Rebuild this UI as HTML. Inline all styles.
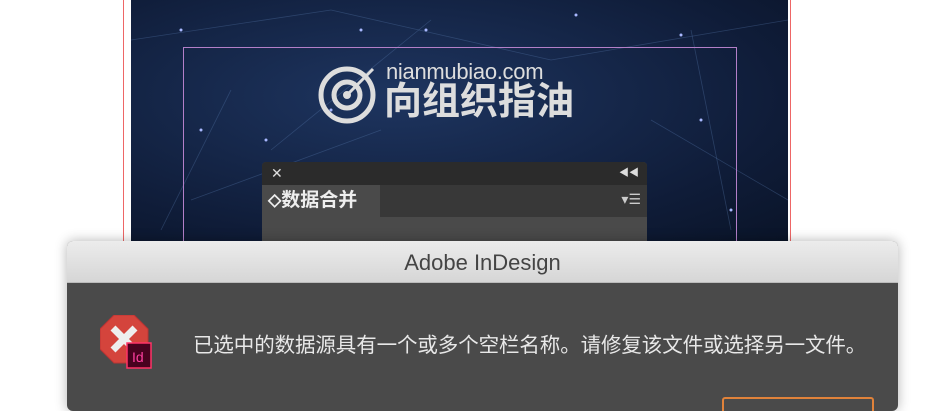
<!DOCTYPE html>
<html><head><meta charset="utf-8"><style>
body{margin:0;width:952px;height:400px;background:#fff;position:relative;overflow:hidden;font-family:"Liberation Sans","Noto Sans CJK SC",sans-serif}
.a{position:absolute}
</style></head><body>
<div class="a" style="left:123px;top:0;width:1px;height:241px;background:#e66"></div>
<div class="a" style="left:790px;top:0;width:1px;height:241px;background:#e66"></div>
<div class="a" style="left:131px;top:0;width:657px;height:241px;background:radial-gradient(ellipse at 40% 40%,#1e3560,#0f1c38 70%,#0a1428)"></div>
<svg class="a" style="left:131px;top:0" width="657" height="241">
<g stroke="#5a7ab0" stroke-opacity=".35" stroke-width=".8">
<line x1="0" y1="40" x2="200" y2="10"/><line x1="200" y1="10" x2="420" y2="60"/><line x1="420" y1="60" x2="657" y2="20"/><line x1="60" y1="200" x2="250" y2="130"/><line x1="520" y1="120" x2="657" y2="200"/><line x1="100" y1="90" x2="30" y2="230"/><line x1="560" y1="30" x2="600" y2="230"/><line x1="300" y1="20" x2="140" y2="150"/></g>
<g fill="#a9b8ff"><circle cx="50" cy="30" r="1.5"/><circle cx="230" cy="30" r="1.5"/><circle cx="445" cy="15" r="1.5"/><circle cx="295" cy="30" r="1.5"/><circle cx="550" cy="35" r="1.5"/><circle cx="70" cy="130" r="1.5"/><circle cx="570" cy="120" r="1.5"/><circle cx="135" cy="140" r="1.5"/><circle cx="600" cy="210" r="1.5"/><circle cx="200" cy="110" r="1.5"/></g>
<rect x="52.5" y="47.5" width="553" height="200" fill="none" stroke="#b37fc8" stroke-width="1"/>
<g fill="none" stroke="#ddd" stroke-width="5"><circle cx="216" cy="95" r="26"/><circle cx="216" cy="95" r="13"/></g>
<circle cx="216" cy="95" r="4" fill="#ddd"/><line x1="216" y1="95" x2="242" y2="69" stroke="#ddd" stroke-width="3"/>
</svg>
<div class="a" style="left:386px;top:59px;color:#ddd;font-size:22px;letter-spacing:-.3px">nianmubiao.com</div>
<div class="a" style="left:384px;top:80px;color:#ddd;font-size:38px;font-weight:bold;line-height:44px">向组织指油</div>
<div class="a" style="left:262px;top:162px;width:385px;height:80px;background:#4a4a4a;border-radius:4px 4px 0 0;overflow:hidden">
<div style="height:23px;background:#2b2b2b;color:#ddd;font-size:14px;line-height:23px;padding-left:9px">✕<span style="float:right;padding-right:8px;font-size:10px">◀◀</span></div>
<div style="height:32px;background:#383838;position:relative"><div style="position:absolute;left:0;top:0;width:118px;height:32px;background:#4a4a4a;color:#eee;font-size:19px;font-weight:bold;line-height:32px;padding-left:6px;box-sizing:border-box">⬦数据合并</div><div style="position:absolute;right:6px;top:6px;color:#ccc;font-size:14px">▾☰</div></div>
</div>
<div class="a" style="left:67px;top:241px;width:831px;height:170px;border-radius:6px;overflow:hidden;background:#4a4a4a;box-shadow:0 0 12px rgba(0,0,0,.3)">
<div style="height:41px;background:linear-gradient(#ececec,#d6d6d6);border-bottom:1px solid #bbb;text-align:center;line-height:44px;font-size:22px;color:#444">Adobe InDesign</div>
<svg class="a" style="left:33px;top:74px" width="56" height="56"><polygon points="14,0 34,0 48,14 48,34 34,48 14,48 0,34 0,14" fill="#d4443c" stroke="#b33" stroke-width="1"/><path d="M13 13L35 35M35 13L13 35" stroke="#eee" stroke-width="7"/><rect x="27" y="28" width="24" height="25" fill="#49021f" stroke="#ff3366" stroke-width="1.5"/><text x="32" y="47" fill="#ff3fa0" font-size="14" font-family="Liberation Sans">Id</text></svg>
<div class="a" style="left:126px;top:87px;color:#e8e8e8;font-size:20.5px;letter-spacing:-.1px;white-space:nowrap">已选中的数据源具有一个或多个空栏名称。请修复该文件或选择另一文件。</div>
<div class="a" style="left:655px;top:156px;width:148px;height:30px;border:2px solid #e0823a;border-radius:3px"></div>
</div>
</body></html>
